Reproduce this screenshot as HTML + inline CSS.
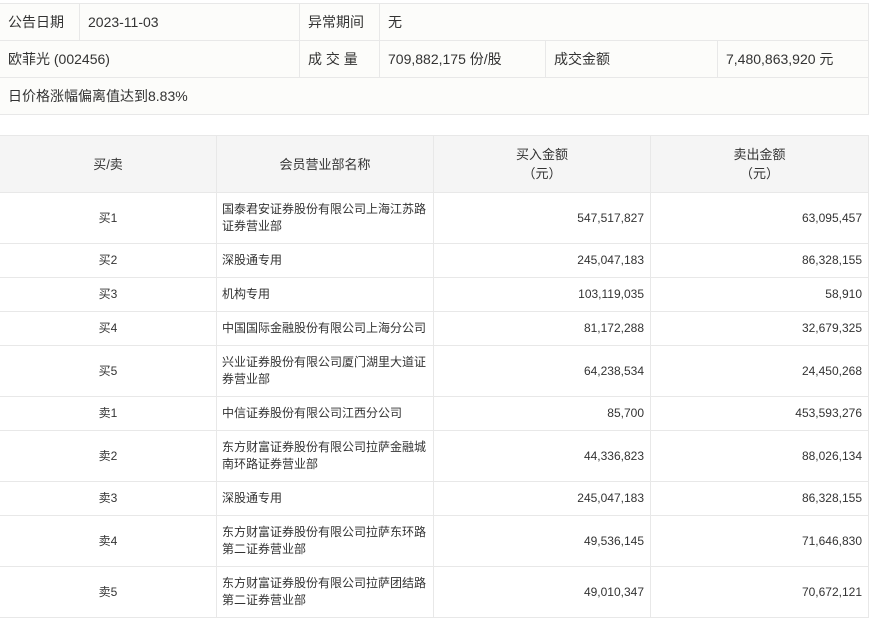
<!DOCTYPE html>
<html><head><meta charset="utf-8"><style>
body{margin:0;background:#fff;font-family:"Liberation Sans","Noto Sans CJK SC",sans-serif;color:#333;}
table{border-collapse:collapse;table-layout:fixed;position:absolute;left:-1px;}
td,th{border:1px solid #e8e8e8;padding:0;font-weight:normal;}
#t1{top:3px;width:869px;background:#fcfcfa;font-size:14px;}
#t1 td{height:36px;padding-left:8px;}
#t2{top:135px;width:869px;font-size:12px;}
#t2 th{background:#f5f5f5;height:56px;font-size:13px;line-height:19px;}
#t2 td{line-height:17px;}
.c{text-align:center}.r{text-align:right;padding-right:6px!important}.l{padding-left:5px!important}
.h2{height:50px}.h1{height:33px}
</style></head><body>
<table id="t1">
<colgroup><col style="width:80px"><col style="width:220px"><col style="width:80px"><col style="width:166px"><col style="width:172px"><col style="width:151px"></colgroup>
<tr><td>公告日期</td><td>2023-11-03</td><td>异常期间</td><td colspan="3">无</td></tr>
<tr><td colspan="2">欧菲光 (002456)</td><td>成 交 量</td><td>709,882,175 份/股</td><td>成交金额</td><td>7,480,863,920 元</td></tr>
<tr><td colspan="6">日价格涨幅偏离值达到8.83%</td></tr>
</table>
<table id="t2">
<colgroup><col style="width:217px"><col style="width:217px"><col style="width:217px"><col style="width:218px"></colgroup>
<tr><th>买/卖</th><th>会员营业部名称</th><th>买入金额<br>（元）</th><th>卖出金额<br>（元）</th></tr>
<tr><td class="c h2">买1</td><td class="l">国泰君安证券股份有限公司上海江苏路证券营业部</td><td class="r">547,517,827</td><td class="r">63,095,457</td></tr>
<tr><td class="c h1">买2</td><td class="l">深股通专用</td><td class="r">245,047,183</td><td class="r">86,328,155</td></tr>
<tr><td class="c h1">买3</td><td class="l">机构专用</td><td class="r">103,119,035</td><td class="r">58,910</td></tr>
<tr><td class="c h1">买4</td><td class="l">中国国际金融股份有限公司上海分公司</td><td class="r">81,172,288</td><td class="r">32,679,325</td></tr>
<tr><td class="c h2">买5</td><td class="l">兴业证券股份有限公司厦门湖里大道证券营业部</td><td class="r">64,238,534</td><td class="r">24,450,268</td></tr>
<tr><td class="c h1">卖1</td><td class="l">中信证券股份有限公司江西分公司</td><td class="r">85,700</td><td class="r">453,593,276</td></tr>
<tr><td class="c h2">卖2</td><td class="l">东方财富证券股份有限公司拉萨金融城南环路证券营业部</td><td class="r">44,336,823</td><td class="r">88,026,134</td></tr>
<tr><td class="c h1">卖3</td><td class="l">深股通专用</td><td class="r">245,047,183</td><td class="r">86,328,155</td></tr>
<tr><td class="c h2">卖4</td><td class="l">东方财富证券股份有限公司拉萨东环路第二证券营业部</td><td class="r">49,536,145</td><td class="r">71,646,830</td></tr>
<tr><td class="c h2">卖5</td><td class="l">东方财富证券股份有限公司拉萨团结路第二证券营业部</td><td class="r">49,010,347</td><td class="r">70,672,121</td></tr>
</table>
</body></html>
